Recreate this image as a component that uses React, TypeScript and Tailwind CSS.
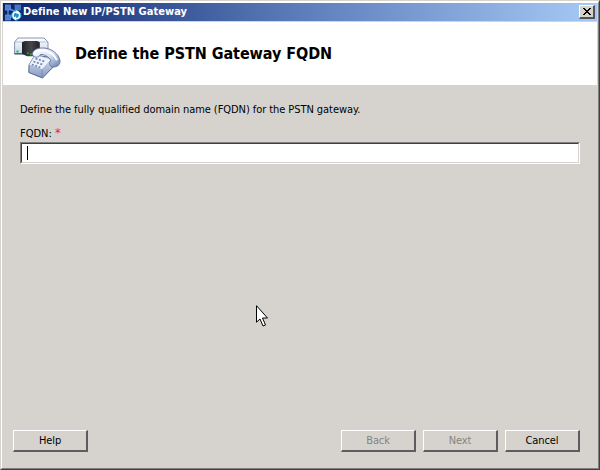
import type { ReactNode } from "react";

const font = "font-['DejaVu_Sans_Condensed','DejaVu_Sans',sans-serif] [font-stretch:condensed]";

function TopologyIcon() {
  return (
    <svg className="shrink-0" width="17" height="17" viewBox="0 0 17 17">
      <path d="M3 5v8M3 4l8 4M12 4L5 14" stroke="#5f8ad4" strokeWidth="1.4" fill="none" />
      <rect x="0.5" y="1" width="5" height="5" fill="#4c80d0" stroke="#6c9be0" strokeWidth=".7" />
      <rect x="10" y="1" width="5.5" height="5" fill="#4474c4" stroke="#5582cc" strokeWidth=".7" />
      <rect x="0.5" y="11" width="5" height="5" fill="#4a7fd0" stroke="#6c9be0" strokeWidth=".7" />
      <path d="M11.3 5.500l5 4v4l-5 3.500-5-3.500v-4z" fill="#1ba3d6" />
      <circle cx="11.300" cy="11.300" r="3.300" stroke="#fff" strokeWidth="1.500" fill="#1f8fc8" />
      <path d="M11.500 6l3 2.200-3 2.100zM11 12.300l-3 2.100 3 2.100z" fill="#fff" />
    </svg>
  );
}

function GatewayIcon() {
  return (
    <svg className="shrink-0" width="48" height="42" viewBox="0 0 48 42">
      <defs>
        <linearGradient id="box" x1="0" y1="0" x2="0" y2="1">
          <stop offset="0" stopColor="#ffffff" />
          <stop offset="1" stopColor="#c6d2ee" />
        </linearGradient>
        <linearGradient id="dark" x1="0" y1="0" x2="1" y2="0">
          <stop offset="0" stopColor="#202124" />
          <stop offset=".5" stopColor="#45474b" />
          <stop offset="1" stopColor="#222326" />
        </linearGradient>
        <linearGradient id="handset" x1="0" y1="0" x2="1" y2="1">
          <stop offset="0" stopColor="#ffffff" />
          <stop offset=".5" stopColor="#dce6f7" />
          <stop offset="1" stopColor="#627da9" />
        </linearGradient>
        <linearGradient id="front" x1="0" y1="0" x2="0" y2="1">
          <stop offset="0" stopColor="#dfe8f7" />
          <stop offset="1" stopColor="#8499c2" />
        </linearGradient>
      </defs>
      <path d="M.6 5L4 1h26l4 4v12H.6z" fill="url(#box)" stroke="#68789c" strokeWidth=".8" />
      <path d="M1 5h33" stroke="#9fadcc" strokeWidth=".7" />
      <path d="M.5 16.8h33" stroke="#304374" strokeWidth="1" />
      <rect x="2.5" y="13.5" width="2" height="2" fill="#18c62b" />
      <path d="M8 5.2l3-1.2h12l2.8 1.2v14H13l-5-2.5z" fill="url(#dark)" />
      <path d="M21 18L15 28l-.2 7.5L28.5 41 42 27l-2-6z" fill="url(#front)" stroke="#42577f" strokeWidth=".9" />
      <path d="M21 18l-6 10 13 4.5L38 22z" fill="#edf3fd" stroke="#899dc3" strokeWidth=".5" />
      <path d="M28 32.5V41" stroke="#7085b1" strokeWidth=".8" />
      <path d="M21.5 21.5l9 3M19.5 24.5l9 3M17.8 27.5l8.5 3" stroke="#7488b1" strokeWidth="1.8" strokeDasharray="2 1.6" />
      <path d="M18.5 18c-1-4 4-7 9-7 9-.7 18 6 18.500 13 .3 4-3 6-7 6-4-.5-4-4-2.500-6 1-2-6-7.500-10-6.500-2 3.500-6 3.500-8 .5z" fill="url(#handset)" stroke="#5c7199" strokeWidth=".9" />
      <path d="M21 15.500c7-5 18-.5 21.500 7" stroke="#fff" strokeWidth="1.800" fill="none" strokeLinecap="round" />
      <path d="M13 15.500h1.500V17H13zM16.200 16.500h1.500V18h-1.500z" fill="#17c832" />
    </svg>
  );
}

function DialogButton({ children, disabled = false }: { children: ReactNode; disabled?: boolean }) {
  return (
    <button
      disabled={disabled}
      className={`h-[22px] w-[75px] border-t border-l border-r-2 border-b-2 border-t-white border-l-white border-r-[#5f5b60] border-b-[#5f5b60] pt-px text-center text-[11px] leading-[18px] tracking-[-0.1px] ${disabled ? "text-[#858380]" : "text-black"}`}
    >
      {children}
    </button>
  );
}

export default function App() {
  return (
    <div className={`${font} relative flex h-[470px] w-[600px] flex-col overflow-hidden border-t border-l border-r border-b border-t-[#d6d3ce] border-l-[#d6d3ce] border-r-[#404040] border-b-[#404040] bg-[#d6d3ce] text-[11px] text-black`}>
      <div className="flex min-h-0 flex-1 flex-col border-t-2 border-l border-r border-b border-t-white border-l-white border-r-[#808080] border-b-[#808080]">
        <header className="mr-px ml-px flex h-[18px] shrink-0 items-center bg-linear-to-r/srgb from-[#0b246a] via-[#5c7dbb] to-[#a6caf5] pl-[2px]">
          <TopologyIcon />
          <span className="ml-px text-[11px] leading-[18px] font-bold tracking-[0.04px] whitespace-nowrap text-white">Define New IP/PSTN Gateway</span>
          <button aria-label="Close" className="mr-[2px] ml-auto flex h-[14px] w-[16px] items-center justify-center border-t border-l border-r-2 border-b-2 border-t-white border-l-white border-r-[#55515a] border-b-[#55515a] bg-[#d6d3ce]">
            <svg width="8" height="7" viewBox="0 0 8 7" shapeRendering="crispEdges">
              <path d="M0 0h2v1H0zM6 0h2v1H6zM1 1h2v1H1zM5 1h2v1H5zM2 2h4v1H2zM3 3h2v1H3zM2 4h4v1H2zM1 5h2v1H1zM5 5h2v1H5zM0 6h2v1H0zM6 6h2v1H6z" />
            </svg>
          </button>
        </header>
        <div className="mx-px mt-px flex h-[63px] shrink-0 items-center bg-white pl-[11px]">
          <div className="mt-[9px]"><GatewayIcon /></div>
          <h1 className="ml-[13px] pt-px text-[16px] leading-6 font-bold tracking-[-0.06px] whitespace-nowrap">Define the PSTN Gateway FQDN</h1>
        </div>
        <main className="flex flex-1 flex-col pr-[18px] pl-[18px]">
          <p className="mt-[17px] leading-4 tracking-[-0.065px] whitespace-nowrap">Define the fully qualified domain name (FQDN) for the PSTN gateway.</p>
          <label className="mt-2 h-4 leading-4">FQDN: <span className="text-[13px] leading-none text-[#f02030]">*</span></label>
          <div className="h-[22px] border border-t-[#808080] border-r-white border-b-white border-l-[#808080]">
            <div className="flex h-full items-center border border-t-[#404040] border-r-[#d6d3ce] border-b-[#d6d3ce] border-l-[#404040] bg-white pl-[5px]">
              <span className="h-[14px] w-px bg-black" />
            </div>
          </div>
        </main>
        <footer className="mb-[16px] flex gap-[7px] pr-[18px] pl-[11px]">
          <DialogButton>Help</DialogButton>
          <div className="flex-1" />
          <DialogButton disabled>Back</DialogButton>
          <DialogButton disabled>Next</DialogButton>
          <DialogButton>Cancel</DialogButton>
        </footer>
      </div>
      <svg className="pointer-events-none absolute top-[303px] left-[254px]" width="14" height="23" viewBox="0 0 14 23">
        <path d="M1.5 1.700v16.500l3.500-3.200 3 7 2.500-1-3-7h5z" fill="#fff" stroke="#000" strokeWidth="1" />
      </svg>
    </div>
  );
}
